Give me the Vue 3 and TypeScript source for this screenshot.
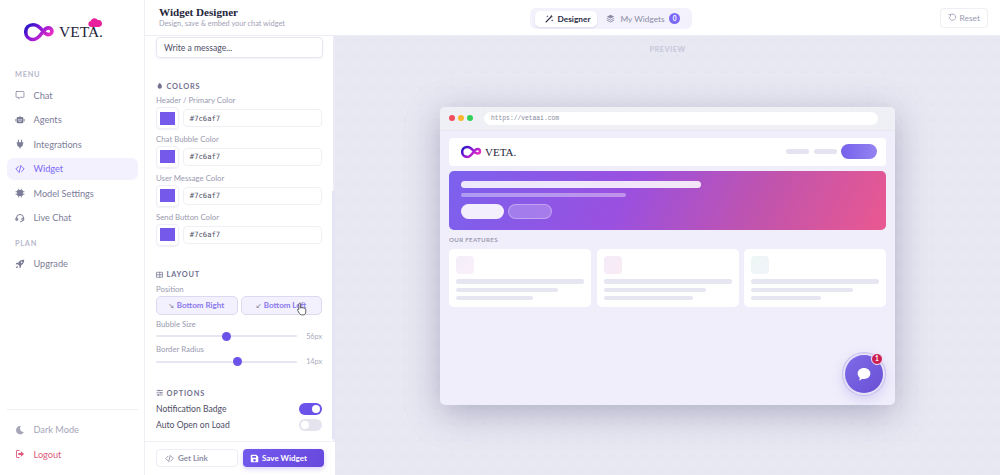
<script setup lang="ts">
interface NavItem {
  label: string
  icon: string
  active?: boolean
}

const menu: NavItem[] = [
  { label: 'Chat', icon: 'chat' },
  { label: 'Agents', icon: 'robot' },
  { label: 'Integrations', icon: 'plug' },
  { label: 'Widget', icon: 'code', active: true },
  { label: 'Model Settings', icon: 'chip' },
  { label: 'Live Chat', icon: 'headset' }
]

const colorRows = ['Header / Primary Color', 'Chat Bubble Color', 'User Message Color', 'Send Button Color']

const features = [
  { tint: 'linear-gradient(135deg, #f3eefc, #faf0f7)', second: 60 },
  { tint: 'linear-gradient(135deg, #f3ebfa, #fbebf4)', second: 70 },
  { tint: 'linear-gradient(135deg, #ebf7f2, #f1f3fb)', second: 55 }
]

const icons: Record<string, string> = {
  robot: 'M11 2h2v3h4a3 3 0 0 1 3 3v9a3 3 0 0 1-3 3H7a3 3 0 0 1-3-3V8a3 3 0 0 1 3-3h4zM8 10v3h3v-3zm5 0v3h3v-3zM9 15.500v1.500h6v-1.500zM1 9.500h2v6H1zm20 0h2v6h-2z',
  plug: 'M7 2h2.500v6h5V2H17v6h3v3h-1v2a6 6 0 0 1-5.500 6v4h-3v-4A6 6 0 0 1 5 13v-2H4V8h3z',
  chip: 'M7 5h10a2 2 0 0 1 2 2v10a2 2 0 0 1-2 2H7a2 2 0 0 1-2-2V7a2 2 0 0 1 2-2zM8 1.500h2V5H8zm6 0h2V5h-2zM8 19h2v3.500H8zm6 0h2v3.500h-2zM1.500 8H5v2H1.500zm0 6H5v2H1.500zM19 8h3.500v2H19zm0 6h3.500v2H19z',
  rocket: 'M22 2c-6-.500-10.500 1.500-14 7H3.500L1.500 13l5-.500 4.500 4.500-.500 5 4-2V15.500C20 12 22.500 8 22 2zM16 6a2 2 0 1 1 0 4 2 2 0 0 1 0-4zM5 16.500c-2 1-2.500 3-2.500 5 2 0 4-.500 5-2.500z',
  moon: 'M14.500 2.500A10 10 0 1 0 21.500 17 8.500 8.500 0 0 1 14.500 2.500z',
  drop: 'M12 2c4 5 7 8.500 7 12.500a7 7 0 0 1-14 0C5 10.500 8 7 12 2z',
  save: 'M4 2h13l5 5v13a2 2 0 0 1-2 2H4a2 2 0 0 1-2-2V4a2 2 0 0 1 2-2zm2 3v5h10V5zm6 8a3.500 3.500 0 1 0 0 7 3.500 3.500 0 0 0 0-7z'
}
</script>

<template>
  <div class="app">
    <aside class="sidebar">
      <div class="logo">
        <svg class="logo-mark" viewBox="0 0 30 20">
          <defs>
            <linearGradient id="inf" x1="0" y1="0" x2="1" y2="0.6">
              <stop offset="0" stop-color="#1d14c4" />
              <stop offset="0.5" stop-color="#8a18d8" />
              <stop offset="1" stop-color="#ea2fc4" />
            </linearGradient>
          </defs>
          <path d="M9 3.500C4.500 3.500 1.700 6.500 1.700 10.500S4.500 17.800 9 17.800c4.500 0 7-4.500 9.500-7.800 1.500-2 3-3.500 5-3.500 2 0 3.600 1.200 3.600 3.200s-1.600 3.300-3.600 3.300c-2 0-3.500-1.500-5-3.200C16 6.500 13.500 3.500 9 3.500z" fill="none" stroke="url(#inf)" stroke-width="3.500" />
        </svg>
        <span class="logo-text">VETA.</span>
        <svg class="logo-cloud" viewBox="0 0 14 9">
          <path d="M3 9a3 3 0 0 1-.4-5.900A4 4 0 0 1 9.800 2 3.500 3.500 0 0 1 11 9z" fill="#e8209c" />
        </svg>
      </div>

      <div class="nav-label">MENU</div>
      <nav class="nav">
        <div v-for="item in menu" :key="item.label" class="nav-item" :class="{ active: item.active }">
          <svg class="nav-icon" viewBox="0 0 24 24">
            <path v-if="item.icon === 'chat'" d="M4 3.500h16a1.500 1.500 0 0 1 1.500 1.500v11a1.500 1.500 0 0 1-1.500 1.500h-7l-4 3.500v-3.500H4A1.500 1.500 0 0 1 2.500 16V5A1.500 1.500 0 0 1 4 3.500z" class="line" />
            <path v-else-if="item.icon === 'code'" d="M8 6l-6 6 6 6M16 6l6 6-6 6M14 3.500l-4 17" class="line heavy" />
            <path v-else-if="item.icon === 'headset'" d="M3.500 15v-3a8.500 8.500 0 0 1 17 0v3M3 12.500h3.500v5H3zM17.500 12.500H21v5h-3.500zM19 17.500c0 2.500-3 3.500-6 3.500" class="line heavy" />
            <path v-else :d="icons[item.icon]" />
          </svg>
          <span>{{ item.label }}</span>
        </div>
      </nav>

      <div class="nav-label plan">PLAN</div>
      <div class="nav-item">
        <svg class="nav-icon" viewBox="0 0 24 24"><path :d="icons.rocket" /></svg>
        <span>Upgrade</span>
      </div>

      <div class="sidebar-foot">
        <div class="nav-item muted">
          <svg class="nav-icon" viewBox="0 0 24 24"><path :d="icons.moon" /></svg>
          <span>Dark Mode</span>
        </div>
        <div class="nav-item danger">
          <svg class="nav-icon" viewBox="0 0 24 24">
            <path d="M10 3.500H5A1.500 1.500 0 0 0 3.500 5v14A1.500 1.500 0 0 0 5 20.500h5" class="line heavy" />
            <path d="M14 5.500l8 6.500-8 6.500v-4H8v-5h6z" />
          </svg>
          <span>Logout</span>
        </div>
      </div>
    </aside>

    <div class="content">
      <header class="topbar">
        <div class="title-block">
          <div class="title">Widget Designer</div>
          <div class="subtitle">Design, save &amp; embed your chat widget</div>
        </div>
        <div class="tabs">
          <div class="tab active">
            <svg class="tab-icon" viewBox="0 0 24 24">
              <path d="M3 21L15 9" class="line thick" />
              <path d="M17 2l1.200 2.800L21 6l-2.800 1.200L17 10l-1.200-2.800L13 6l2.800-1.200zM6 3l.8 2.200L9 6l-2.200.8L6 9l-.8-2.200L3 6l2.200-.8zM19 14l.8 2.200L22 17l-2.200.8L19 20l-.8-2.200L16 17l2.200-.8z" />
            </svg>
            Designer
          </div>
          <div class="tab">
            <svg class="tab-icon" viewBox="0 0 24 24">
              <path d="M12 2l10 5-10 5L2 7z" />
              <path d="M3 12l9 4.500L21 12M3 17l9 4.500L21 17" class="line heavy" />
            </svg>
            My Widgets
            <span class="count">0</span>
          </div>
        </div>
        <div class="reset">
          <svg class="reset-icon" viewBox="0 0 24 24">
            <path d="M7 4.500A9 9 0 1 1 3.500 12M7 9V4.500H2.500" class="line heavy" />
          </svg>
          Reset
        </div>
      </header>

      <div class="workspace">
        <section class="panel">
          <div class="message-input">Write a message...</div>

          <div class="section-head colors">
            <svg class="section-icon" viewBox="0 0 24 24"><path :d="icons.drop" /></svg>
            COLORS
          </div>
          <div v-for="name in colorRows" :key="name" class="color-field">
            <div class="field-label">{{ name }}</div>
            <div class="color-row">
              <div class="swatch"><span></span></div>
              <div class="hex">#7c6af7</div>
            </div>
          </div>

          <div class="section-head layout">
            <svg class="section-icon" viewBox="0 0 24 24">
              <path d="M3 4h18v16H3zM3 12h18M12 4v16" class="line heavy" />
            </svg>
            LAYOUT
          </div>
          <div class="field-label">Position</div>
          <div class="position-row">
            <div class="pos-btn"><span class="arrow">↘</span> Bottom Right</div>
            <div class="pos-btn"><span class="arrow">↙</span> Bottom Left</div>
          </div>
          <div class="field-label bubble">Bubble Size</div>
          <div class="slider-row">
            <div class="track"><span class="thumb first"></span></div>
            <span class="slider-value">56px</span>
          </div>
          <div class="field-label radius">Border Radius</div>
          <div class="slider-row">
            <div class="track"><span class="thumb second"></span></div>
            <span class="slider-value">14px</span>
          </div>

          <div class="section-head options">
            <svg class="section-icon" viewBox="0 0 24 24">
              <path d="M3 5h18M3 12h18M3 19h18" class="line heavy" />
              <path d="M8 2.500h3v5H8zM14 9.500h3v5h-3zM6 16.500h3v5H6z" />
            </svg>
            OPTIONS
          </div>
          <div class="toggle-row">
            <span>Notification Badge</span>
            <span class="toggle on"><i></i></span>
          </div>
          <div class="toggle-row">
            <span>Auto Open on Load</span>
            <span class="toggle"><i></i></span>
          </div>

          <div class="panel-foot">
            <div class="foot-btn link">
              <svg class="foot-icon" viewBox="0 0 24 24"><path d="M8 6l-6 6 6 6M16 6l6 6-6 6M14 3.500l-4 17" class="line heavy" /></svg>
              Get Link
            </div>
            <div class="foot-btn save">
              <svg class="foot-icon" viewBox="0 0 24 24"><path :d="icons.save" /></svg>
              Save Widget
            </div>
          </div>

          <span class="scroll-thumb"></span>
          <svg class="hand" viewBox="0 0 14 18">
            <path d="M4.500 1.500c.8 0 1.300.6 1.300 1.300v5l.8-.1c.2-.8 1.900-.8 2.100.2.500-.6 1.800-.4 1.900.5.700-.4 1.900 0 1.900 1v3.500c0 1.800-1 3.600-3 3.600H7c-1.500 0-2-.7-2.800-2L2 10.800c-.7-1.100.6-2.200 1.600-1.200V2.800c0-.7.200-1.300.9-1.300z" fill="#fff" stroke="#222" stroke-width="0.900" />
          </svg>
        </section>

        <section class="preview">
          <div class="preview-label">PREVIEW</div>
          <div class="browser">
            <div class="browser-bar">
              <span class="dot red"></span>
              <span class="dot amber"></span>
              <span class="dot green"></span>
              <div class="url">https://vetaai.com</div>
            </div>
            <div class="browser-body">
              <div class="site-nav">
                <svg class="mini-mark" viewBox="0 0 30 20">
                  <path d="M9 3.500C4.500 3.500 1.700 6.500 1.700 10.500S4.500 17.800 9 17.800c4.500 0 7-4.500 9.500-7.800 1.500-2 3-3.500 5-3.500 2 0 3.600 1.200 3.600 3.200s-1.600 3.300-3.600 3.300c-2 0-3.500-1.500-5-3.200C16 6.500 13.500 3.500 9 3.500z" fill="none" stroke="url(#inf)" stroke-width="3.600" />
                </svg>
                <span class="mini-text">VETA.</span>
                <span class="nav-spacer"></span>
                <span class="nav-pill"></span>
                <span class="nav-pill"></span>
                <span class="nav-cta"></span>
              </div>
              <div class="hero">
                <span class="hero-line one"></span>
                <span class="hero-line two"></span>
                <div class="hero-btns">
                  <span class="hero-btn solid"></span>
                  <span class="hero-btn ghost"></span>
                </div>
              </div>
              <div class="features-label">OUR FEATURES</div>
              <div class="features">
                <div v-for="(f, i) in features" :key="i" class="feature">
                  <span class="feature-icon" :style="{ background: f.tint }"></span>
                  <span class="bar big"></span>
                  <span class="bar small wide"></span>
                  <span class="bar small" :style="{ width: f.second + '%' }"></span>
                </div>
              </div>
            </div>
            <div class="bubble-btn">
              <svg class="bubble-icon" viewBox="0 0 24 24">
                <path d="M12 3c5.500 0 9.500 3.600 9.500 8.200s-4 8.200-9.500 8.200c-.9 0-1.800-.1-2.600-.3L5 22l.6-4.500c-2-1.500-3.100-3.800-3.100-6.300C2.500 6.600 6.500 3 12 3z" fill="#fff" />
              </svg>
              <span class="badge">1</span>
            </div>
          </div>
        </section>
      </div>
    </div>
  </div>
</template>

<style scoped>
.app {
  display: flex;
  width: 1000px;
  height: 475px;
  overflow: hidden;
  background: #fff;
  font-family: Lato, "Noto Sans", sans-serif;
  color: #3a3a55;
}

svg path:not([fill]) {
  fill: currentColor;
}

svg path.line {
  fill: none;
  stroke: currentColor;
  stroke-width: 1.8;
  stroke-linejoin: round;
  stroke-linecap: round;
}

svg path.heavy {
  stroke-width: 2.3;
}

svg path.thick {
  stroke-width: 3.6;
}

/* sidebar */
.sidebar {
  width: 145px;
  flex-shrink: 0;
  display: flex;
  flex-direction: column;
  box-sizing: border-box;
  padding: 0 6px 10px 7px;
  border-right: 1px solid #eeeef5;
}

.logo {
  position: relative;
  display: flex;
  align-items: center;
  height: 62px;
  padding-left: 17px;
  flex-shrink: 0;
}

.logo-mark {
  width: 31px;
  height: 21px;
  margin-top: 1px;
}

.logo-text {
  margin-left: 4px;
  margin-top: 2px;
  font-family: "Liberation Serif", serif;
  font-size: 15.5px;
  color: #24243a;
}

.logo-cloud {
  position: absolute;
  left: 81px;
  top: 18px;
  width: 14px;
  height: 9px;
}

.nav-label {
  height: 12px;
  line-height: 12px;
  margin: 7px 0 3px 8px;
  font-size: 7.4px;
  font-weight: 700;
  letter-spacing: 0.7px;
  color: #b8b8ca;
}

.nav-label.plan {
  margin-top: 9px;
}

.nav {
  display: flex;
  flex-direction: column;
  gap: 2.5px;
}

.nav-item {
  display: flex;
  align-items: center;
  gap: 7.5px;
  height: 22px;
  padding-left: 8px;
  border-radius: 7px;
  font-size: 9.2px;
  color: #7d7d98;
  flex-shrink: 0;
}

.nav-item.active {
  background: #f3f1fe;
  color: #7c6af7;
}

.nav-icon {
  width: 10px;
  height: 10px;
  flex-shrink: 0;
  margin-right: 1px;
}

.sidebar-foot {
  margin-top: auto;
  border-top: 1px solid #eeeef5;
  padding-top: 9px;
  display: flex;
  flex-direction: column;
  gap: 2.500px;
}

.nav-item.muted {
  color: #a6a6b9;
}

.nav-item.danger {
  color: #dd5c7c;
}

/* top bar */
.content {
  flex: 1;
  min-width: 0;
  display: flex;
  flex-direction: column;
}

.topbar {
  position: relative;
  height: 36px;
  flex-shrink: 0;
  display: flex;
  align-items: center;
  justify-content: space-between;
  box-sizing: border-box;
  padding: 0 12px 0 14px;
  background: #fff;
  border-bottom: 1px solid #ececf4;
  z-index: 2;
}

.title {
  font-family: "Liberation Serif", serif;
  font-size: 11.1px;
  font-weight: 700;
  line-height: 13px;
  color: #25253c;
}

.subtitle {
  font-size: 7.3px;
  line-height: 10px;
  color: #a2a2b6;
}

.tabs {
  position: absolute;
  left: 385px;
  top: 8px;
  display: flex;
  align-items: center;
  gap: 3px;
  width: 162px;
  height: 21px;
  box-sizing: border-box;
  padding: 0 0 0 5px;
  border-radius: 6px;
  background: #f3f2fc;
}

.tab {
  display: flex;
  align-items: center;
  gap: 5.500px;
  height: 16px;
  padding: 0 6px;
  border-radius: 5px;
  font-size: 8.3px;
  color: #8b8ba5;
}

.tab.active {
  width: 62px;
  box-sizing: border-box;
  background: #fff;
  color: #2c2c45;
  font-weight: 700;
  box-shadow: 0 1px 2px rgba(90, 80, 160, 0.14);
  gap: 3.500px;
  padding: 0 0 0 10px;
}

.tab-icon {
  width: 9px;
  height: 9px;
}

.count {
  display: inline-flex;
  align-items: center;
  justify-content: center;
  width: 11px;
  height: 11px;
  margin-left: -1px;
  border-radius: 50%;
  background: #7c6af7;
  color: #fff;
  font-size: 6.500px;
  font-weight: 700;
}

.reset {
  display: flex;
  align-items: center;
  gap: 3px;
  height: 18px;
  padding: 0 7px;
  border: 1px solid #eeeef5;
  border-radius: 4px;
  font-size: 8.4px;
  color: #9a9ab0;
}

.reset-icon {
  width: 8.500px;
  height: 8.500px;
}

.workspace {
  flex: 1;
  min-height: 0;
  display: flex;
}

/* settings panel */
.panel {
  position: relative;
  width: 190px;
  flex-shrink: 0;
  display: flex;
  flex-direction: column;
  box-sizing: border-box;
  padding: 1px 11px 0 11px;
  background: #fff;
  border-right: 2px solid #ebebf6;
}

.scroll-thumb {
  position: absolute;
  right: -2px;
  top: 155px;
  width: 3px;
  height: 248px;
  background: #e4e4f2;
}

.message-input {
  display: flex;
  align-items: center;
  height: 21px;
  box-sizing: border-box;
  width: 167px;
  padding-left: 7px;
  border: 1px solid #e6e5f2;
  border-radius: 4px;
  box-shadow: 0 1px 2px rgba(90, 80, 160, 0.08);
  font-size: 8.6px;
  color: #4e4e66;
  flex-shrink: 0;
}

.section-head {
  display: flex;
  align-items: center;
  gap: 3px;
  height: 12px;
  font-size: 7.4px;
  font-weight: 700;
  letter-spacing: 0.8px;
  color: #727290;
  flex-shrink: 0;
}

.section-head.colors {
  margin-top: 22px;
}

.section-head.layout {
  margin-top: 18px;
}

.section-head.options {
  margin-top: 19px;
}

.section-icon {
  width: 7.500px;
  height: 7.500px;
}

.color-field {
  flex-shrink: 0;
}

.field-label {
  height: 11px;
  line-height: 11px;
  font-size: 7.8px;
  color: #9a9ab0;
  flex-shrink: 0;
}

.section-head + .color-field .field-label {
  margin-top: 3px;
}

.color-row {
  display: flex;
  align-items: center;
  gap: 4px;
  height: 22px;
  margin: 1px 0 4.900px;
}

.swatch {
  display: flex;
  align-items: center;
  justify-content: center;
  box-sizing: border-box;
  width: 23px;
  height: 22px;
  border: 1px solid #eeeef6;
  border-radius: 4px;
  box-shadow: 0 1px 1px rgba(90, 80, 160, 0.08);
}

.swatch span {
  width: 15px;
  height: 13px;
  background: #7459ea;
}

.hex {
  display: flex;
  align-items: center;
  width: 140px;
  height: 18px;
  box-sizing: border-box;
  padding-left: 6px;
  border: 1px solid #efeff6;
  border-radius: 4px;
  font-family: "DejaVu Sans Mono", monospace;
  font-size: 7.2px;
  color: #4e4e66;
}

.section-head.layout + .field-label {
  margin-top: 3px;
}

.position-row {
  display: flex;
  gap: 3px;
  margin-top: 1px;
  flex-shrink: 0;
}

.pos-btn {
  display: flex;
  align-items: center;
  justify-content: center;
  gap: 3px;
  box-sizing: border-box;
  width: 82px;
  height: 19px;
  border: 1px solid #dcd9f1;
  border-radius: 5px;
  background: #f3f1fd;
  font-size: 8px;
  font-weight: 700;
  color: #8a78ee;
}

.pos-btn .arrow {
  font-size: 6px;
  color: #8a8aa6;
}

.field-label.bubble {
  margin-top: 4px;
}

.field-label.radius {
  margin-top: 1.500px;
}

.slider-row {
  display: flex;
  align-items: center;
  height: 13px;
  flex-shrink: 0;
}

.track {
  position: relative;
  width: 141px;
  height: 2px;
  border-radius: 1px;
  background: #e6e5f1;
}

.thumb {
  position: absolute;
  top: -3.500px;
  width: 9px;
  height: 9px;
  border-radius: 50%;
  background: #6b52e8;
}

.thumb.first {
  left: 66px;
}

.thumb.second {
  left: 77px;
}

.slider-value {
  margin-left: auto;
  font-size: 7.2px;
  color: #aaaabc;
}

.toggle-row {
  display: flex;
  align-items: center;
  justify-content: space-between;
  height: 16px;
  font-size: 8.6px;
  color: #4e4e66;
  flex-shrink: 0;
}

.section-head.options + .toggle-row {
  margin-top: 2px;
}

.toggle {
  display: flex;
  align-items: center;
  box-sizing: border-box;
  width: 23px;
  height: 12px;
  padding: 0 2px;
  border-radius: 6px;
  background: #e4e3ee;
}

.toggle i {
  width: 8px;
  height: 8px;
  border-radius: 50%;
  background: #fff;
}

.toggle.on {
  justify-content: flex-end;
  background: #6b52e8;
}

.panel-foot {
  position: absolute;
  left: 0;
  right: -2px;
  bottom: 0;
  height: 34px;
  display: flex;
  gap: 5px;
  align-items: flex-start;
  box-sizing: border-box;
  padding: 7px 10px 0 11px;
  background: #fff;
  border-top: 1px solid #f0f0f7;
}

.foot-btn {
  display: flex;
  align-items: center;
  box-sizing: border-box;
  width: 81px;
  height: 18px;
  gap: 3px;
  border-radius: 4px;
  font-size: 8px;
  font-weight: 700;
}

.foot-btn.link {
  width: 82px;
  padding-left: 8px;
  gap: 4px;
  border: 1px solid #ededf5;
  color: #8f8fa7;
}

.foot-btn.save {
  padding-left: 7px;
  background: linear-gradient(135deg, #7459ee, #6748dc);
  color: #fff;
  box-shadow: 0 2px 5px rgba(103, 72, 220, 0.25);
}

.foot-icon {
  width: 9px;
  height: 9px;
}

.hand {
  position: absolute;
  left: 151px;
  top: 266px;
  width: 11px;
  height: 14px;
}

/* preview */
.preview {
  position: relative;
  flex: 1;
  min-width: 0;
  display: flex;
  align-items: center;
  justify-content: center;
  background-color: #e8e8f3;
  background-image: radial-gradient(circle, #dadae9 0.6px, transparent 0.9px);
  background-size: 16px 16px;
  background-position: -2px -4px;
}

.preview-label {
  position: absolute;
  top: 9px;
  left: 0;
  right: 0;
  text-align: center;
  font-size: 7.2px;
  font-weight: 700;
  letter-spacing: 0.6px;
  color: #c6c6d8;
}

.browser {
  position: relative;
  display: flex;
  flex-direction: column;
  width: 455px;
  height: 298px;
  border-radius: 5px;
  overflow: hidden;
  background: #f0eefb;
  box-shadow: 0 8px 34px rgba(60, 60, 105, 0.34);
}

.browser-bar {
  display: flex;
  align-items: center;
  gap: 3px;
  height: 24px;
  flex-shrink: 0;
  box-sizing: border-box;
  padding: 0 17px 0 9px;
  background: #efeff6;
  border-bottom: 1px solid #e8e8f2;
}

.dot {
  width: 6px;
  height: 6px;
  border-radius: 50%;
}

.dot.red {
  background: #f04e5e;
}

.dot.amber {
  background: #fbb62e;
}

.dot.green {
  background: #33cf5a;
}

.url {
  flex: 1;
  display: flex;
  align-items: center;
  height: 13px;
  margin-left: 8px;
  padding-left: 7px;
  border-radius: 7px;
  background: #fff;
  font-family: "Liberation Mono", monospace;
  font-size: 6.300px;
  color: #8a8a9e;
}

.browser-body {
  flex: 1;
  display: flex;
  flex-direction: column;
  padding: 7px 9px 0;
}

.site-nav {
  display: flex;
  align-items: center;
  height: 28px;
  flex-shrink: 0;
  box-sizing: border-box;
  padding: 0 9px 0 12px;
  border-radius: 4px;
  background: #fff;
}

.mini-mark {
  width: 21px;
  height: 15px;
}

.mini-text {
  margin-left: 3px;
  font-family: "Liberation Serif", serif;
  font-size: 11px;
  color: #24243a;
}

.nav-spacer {
  flex: 1;
}

.nav-pill {
  width: 23px;
  height: 5px;
  margin-right: 5px;
  border-radius: 3px;
  background: #e4e3f0;
}

.nav-cta {
  width: 36px;
  height: 15px;
  margin-left: -1px;
  border-radius: 8px;
  background: linear-gradient(90deg, #7560ec, #9484f0);
}

.hero {
  display: flex;
  flex-direction: column;
  height: 59px;
  margin-top: 5px;
  flex-shrink: 0;
  box-sizing: border-box;
  padding: 10px 12px 0;
  border-radius: 5px;
  background: linear-gradient(115deg, #7b61ee 0%, #9a50e0 40%, #c254ac 72%, #ea5890 100%);
}

.hero-line {
  display: block;
  border-radius: 4px;
}

.hero-line.one {
  width: 240px;
  height: 7px;
  background: rgba(255, 255, 255, 0.86);
}

.hero-line.two {
  width: 165px;
  height: 4.500px;
  margin-top: 5px;
  background: rgba(255, 255, 255, 0.38);
}

.hero-btns {
  display: flex;
  gap: 4px;
  margin-top: 6.500px;
}

.hero-btn {
  height: 15px;
  border-radius: 8px;
}

.hero-btn.solid {
  width: 43px;
  background: rgba(255, 255, 255, 0.9);
}

.hero-btn.ghost {
  width: 44px;
  background: rgba(255, 255, 255, 0.22);
  border: 1px solid rgba(255, 255, 255, 0.3);
  box-sizing: border-box;
}

.features-label {
  height: 9px;
  line-height: 9px;
  margin-top: 5px;
  font-size: 6.200px;
  font-weight: 700;
  letter-spacing: 0.3px;
  color: #9c9cb2;
  flex-shrink: 0;
}

.features {
  display: flex;
  gap: 5.500px;
  margin-top: 5px;
}

.feature {
  flex: 1;
  display: flex;
  flex-direction: column;
  height: 58px;
  box-sizing: border-box;
  padding: 7px 7px 0;
  border-radius: 5px;
  background: #fff;
}

.feature-icon {
  width: 18px;
  height: 18px;
  border-radius: 4px;
}

.bar {
  display: block;
  background: #e6e5f2;
  border-radius: 3px;
}

.bar.big {
  width: 100%;
  height: 5px;
  margin-top: 5px;
}

.bar.small {
  height: 3.500px;
  margin-top: 4.500px;
}

.bar.wide {
  width: 80%;
}

.bubble-btn {
  position: absolute;
  right: 12px;
  bottom: 12px;
  display: flex;
  align-items: center;
  justify-content: center;
  width: 38px;
  height: 38px;
  border-radius: 50%;
  background: linear-gradient(135deg, #7e6ae8, #6a50d4);
  box-shadow: 0 0 0 2px #e6e2f8, 0 0 0 3px #c8c0ee, 0 4px 14px rgba(106, 80, 212, 0.3);
}

.bubble-icon {
  width: 16px;
  height: 16px;
}

.badge {
  position: absolute;
  top: -2px;
  right: 0;
  display: flex;
  align-items: center;
  justify-content: center;
  box-sizing: border-box;
  width: 12px;
  height: 12px;
  border: 1px solid #f0eefb;
  border-radius: 50%;
  background: #cc1f54;
  color: #fff;
  font-size: 6.500px;
  font-weight: 700;
}
</style>
